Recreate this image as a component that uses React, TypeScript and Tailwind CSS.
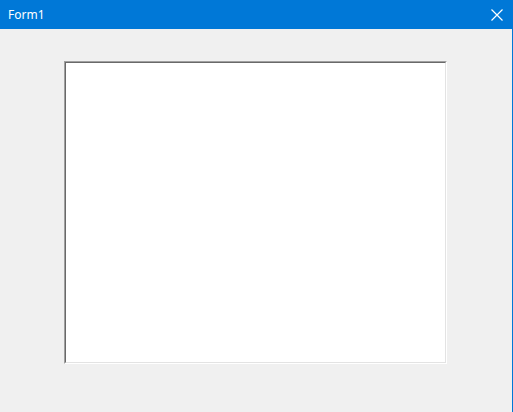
export default function App() {
  return (
    <div className="w-[513px] h-[412px] flex flex-col overflow-hidden" style={{ fontFamily: '"Segoe UI", "Noto Sans", "Liberation Sans", sans-serif' }}>
      <div className="h-[29px] shrink-0 bg-[#0078d7] flex items-center justify-between pl-[8px] pr-[10px]">
        <span className="text-white text-[12px] leading-none">Form1</span>
        <svg width="12" height="12" viewBox="0 0 12 12" className="block">
          <path d="M0.5 0.5 L11.5 11.5 M11.5 0.5 L0.5 11.5" stroke="white" strokeWidth="1.2" fill="none" />
        </svg>
      </div>
      <div className="flex-1 bg-[#f0f0f0] border-r border-[#0078d7] pl-[64px] pt-[32px]">
        <div className="w-[383px] h-[303px] border border-t-[#a0a0a0] border-l-[#a0a0a0] border-b-white border-r-white">
          <div className="w-full h-full bg-white border border-t-[#696969] border-l-[#696969] border-b-[#e3e3e3] border-r-[#e3e3e3]" />
        </div>
      </div>
    </div>
  )
}
